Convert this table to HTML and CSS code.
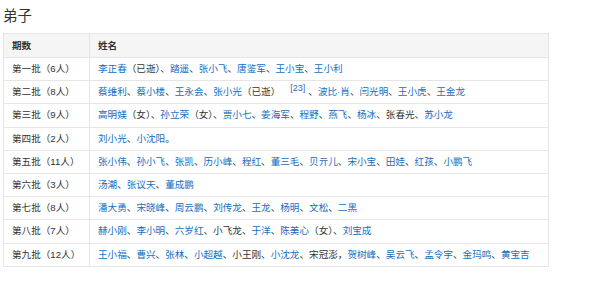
FILE: index.html
```html
<!DOCTYPE html>
<html lang="zh-CN">
<head>
<meta charset="utf-8">
<title>弟子</title>
<link rel="stylesheet" href="styles.css">
</head>
<body>
<div class="page">
  <h2 class="title">弟子</h2>
  <table class="disciples">
    <thead>
      <tr><th class="c1">期数</th><th class="c2">姓名</th></tr>
    </thead>
    <tbody>
      <tr><td>第一批（6人）</td><td><a>李正春</a>（已逝）、<a>踏遥</a>、<a>张小飞</a>、<a>唐鉴军</a>、<a>王小宝</a>、<a>王小利</a></td></tr>
      <tr><td>第二批（8人）</td><td><a>蔡维利</a>、<a>蔡小楼</a>、<a>王永会</a>、<a>张小光</a>（已逝）<sup class="ref">[23]</sup>、<a>波比·肖</a>、<a>闫光明</a>、<a>王小虎</a>、<a>王金龙</a></td></tr>
      <tr><td>第三批（9人）</td><td><a>高明媄</a>（女）、<a>孙立荣</a>（女）、<a>贾小七</a>、<a>姜海军</a>、<a>程野</a>、<a>燕飞</a>、<a>杨冰</a>、张春光、<a>苏小龙</a></td></tr>
      <tr><td>第四批（2人）</td><td><a>刘小光</a>、<a>小沈阳</a>。</td></tr>
      <tr><td>第五批（11人）</td><td><a>张小伟</a>、<a>孙小飞</a>、<a>张凯</a>、<a>历小峰</a>、<a>程红</a>、<a>董三毛</a>、<a>贝亓儿</a>、<a>宋小宝</a>、<a>田娃</a>、<a>红孩</a>、<a>小鹏飞</a></td></tr>
      <tr><td>第六批（3人）</td><td><a>汤潮</a>、<a>张议天</a>、<a>董成鹏</a></td></tr>
      <tr><td>第七批（8人）</td><td><a>潘大勇</a>、<a>宋晓峰</a>、<a>周云鹏</a>、<a>刘传龙</a>、<a>王龙</a>、<a>杨明</a>、<a>文松</a>、<a>二黑</a></td></tr>
      <tr><td>第八批（7人）</td><td><a>赫小刚</a>、<a>李小明</a>、<a>六岁红</a>、小飞龙、<a>于洋</a>、<a>陈美心</a>（女）、<a>刘宝成</a></td></tr>
      <tr><td>第九批（12人）</td><td><a>王小福</a>、<a>曹兴</a>、<a>张林</a>、<a>小超越</a>、小王刚、<a>小沈龙</a>、宋冠澎，<a>贺树峰</a>、<a>吴云飞</a>、<a>孟令宇</a>、<a>金玛鸣</a>、<a>黄宝吉</a></td></tr>
    </tbody>
  </table>
</div>
</body>
</html>
```
FILE: styles.css
```css
html, body {
  margin: 0;
  padding: 0;
  background: #fff;
}
.page {
  padding: 6px 0 0 3px;
  font-family: "Liberation Sans", "Noto Sans CJK SC", sans-serif;
  color: #333;
}
.title {
  margin: 0 0 7px 0;
  font-size: 14.4px;
  line-height: 20px;
  font-weight: normal;
  color: #333;
}
.disciples {
  width: 546px;
  border-collapse: collapse;
  font-size: 9.6px;
}
.disciples th,
.disciples td {
  border: 1px solid #e6e6e6;
  text-align: left;
  vertical-align: middle;
  padding: 4px 7px 4px 8px;
  line-height: 14.2px;
  white-space: nowrap;
}
.disciples th {
  background: #f5f5f5;
  font-weight: bold;
  line-height: 15px;
}
.disciples .c1 {
  width: 70px;
}
.disciples a {
  color: #136ec2;
  text-decoration: none;
}
.ref {
  font-size: 9px;
  color: #3366cc;
  vertical-align: 4px;
  line-height: 0;
  margin: 0 3px 0 10px;
}
```
